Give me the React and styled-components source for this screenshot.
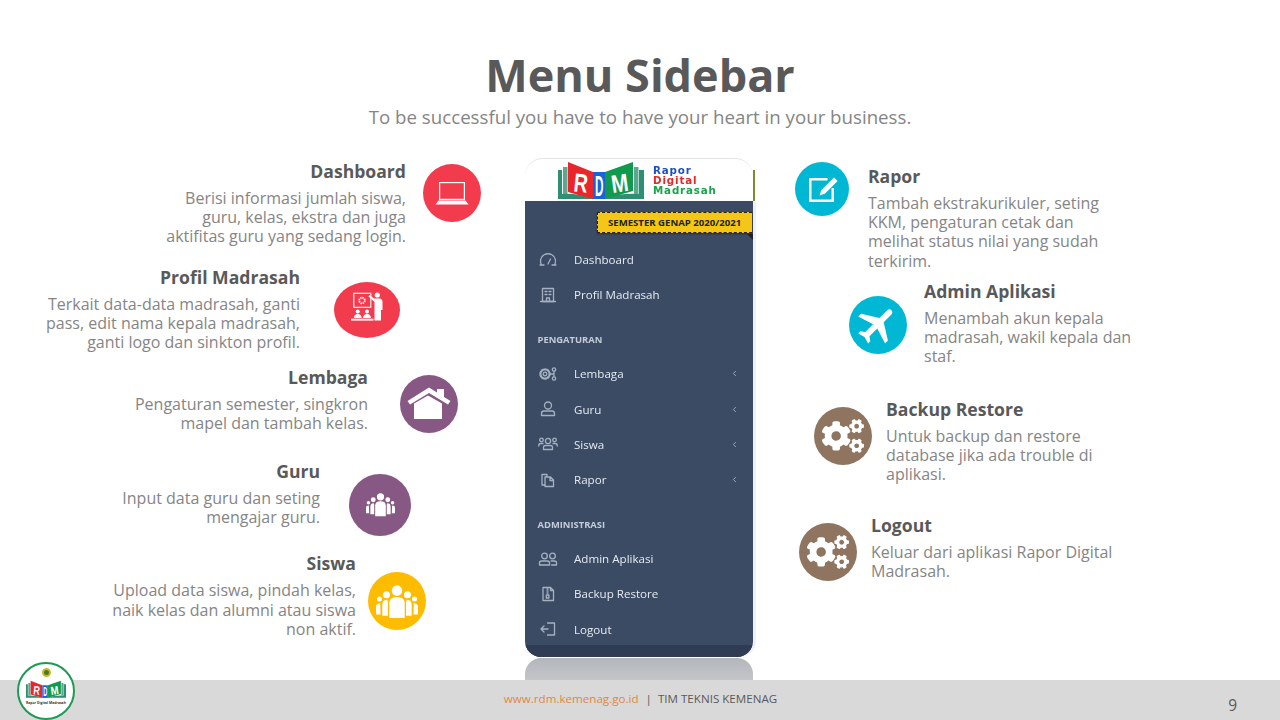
import React from "react";
import styled, { createGlobalStyle } from "styled-components";
import { FaCogs } from "react-icons/fa";
import { MdFlight } from "react-icons/md";
import { ChevronLeft } from "lucide-react";

const Global = createGlobalStyle`
  html, body { margin: 0; padding: 0; background: #fff; }
  * { box-sizing: border-box; }
`;

const Slide = styled.div`
  width: 1280px; height: 720px; overflow: hidden; display: flex; flex-direction: column;
  font-family: "Open Sans", sans-serif; background: #fff; position: relative;
`;
const Header = styled.header`
  height: 158px; padding-top: 44px; text-align: center; flex: none;
`;
const Title = styled.h1`
  margin: 0; font-size: 45px; line-height: 61px; font-weight: 700; color: #595959;
`;
const Subtitle = styled.p`
  margin: 0; font-size: 18.7px; line-height: 24px; color: #858585;
`;
const Stage = styled.main`
  flex: 1; display: flex; align-items: flex-start; min-height: 0;
`;
const Column = styled.section`
  width: ${p => p.$width}px; flex: none; display: flex; flex-direction: column;
  align-items: ${p => (p.$side === "left" ? "flex-end" : "flex-start")};
`;
const Callout = styled.article`
  display: flex; align-items: flex-start; gap: ${p => p.$gap}px;
  margin-top: ${p => p.$top}px;
  margin-${p => (p.$side === "left" ? "right" : "left")}: ${p => p.$inset}px;
`;
const CalloutText = styled.div`
  text-align: ${p => (p.$side === "left" ? "right" : "left")}; white-space: nowrap;
`;
const CalloutTitle = styled.h3`
  margin: 0 0 6px; font-size: 17.6px; line-height: 24px; font-weight: 700; color: #595959;
`;
const CalloutBody = styled.p`
  margin: 0; font-size: 16px; line-height: 19.2px; color: #858585;
`;
const Badge = styled.div`
  flex: none; width: ${p => p.$w}px; height: ${p => p.$h}px; border-radius: 50%;
  background: ${p => p.$color}; margin-top: ${p => p.$offset}px;
  display: flex; align-items: center; justify-content: center; color: #fff;
`;
const PlaneIcon = styled(MdFlight)`
  transform: rotate(45deg);
`;

/* central phone mock-up */
const Phone = styled.div`
  width: 228px; flex: none; display: flex; flex-direction: column; position: relative;
`;
const PhoneTop = styled.div`
  height: 43px; background: #fff; border-radius: 18px 18px 0 0; border-top: 1px solid #e4e4e4;
  display: flex; align-items: center; gap: 9px; padding: 0 0 0 33px; position: relative;
  &::after {
    content: ""; position: absolute; right: -2px; bottom: 0; width: 2px; height: 31px; background: #7f8a2a;
  }
`;
const Wordmark = styled.div`
  font-family: "DejaVu Sans", sans-serif; font-weight: 700; font-size: 10.3px; line-height: 10px;
  letter-spacing: .85px; filter: blur(.2px);
`;
const WordLine = styled.div`
  color: ${p => p.$color};
`;
const Panel = styled.nav`
  height: 456px; background: #3c4b64; border-radius: 0 0 16px 16px; overflow: hidden;
  display: flex; flex-direction: column; position: relative;
  box-shadow: 3px 0 0 #eef0f6;
  &::after {
    content: ""; position: absolute; left: 0; right: 0; bottom: 0; height: 12px; background: #303c54;
  }
`;
const Ribbon = styled.div`
  align-self: flex-end; margin: 11px 1px 0 0; width: 155px; height: 21px; flex: none;
  background: #f5c518; border-top: 1px dashed #222; border-bottom: 1px dashed #222; border-left: 1px dashed #222;
  color: #222; font-size: 9.6px; font-weight: 700; line-height: 19px; white-space: nowrap;
  padding-left: 10px; box-shadow: 0 1px 2px rgba(0,0,0,.4);
`;
const RibbonFold = styled.span`
  position: absolute; top: 33px; right: 0; width: 0; height: 0;
  border-top: 6px solid #222; border-right: 6px solid transparent; transform: scaleX(-1);
`;
const MenuList = styled.div`
  display: flex; flex-direction: column; padding-top: ${p => p.$top || 0}px;
  filter: blur(.25px);
`;
const SectionLabel = styled.div`
  font-size: 9.4px; font-weight: 700; color: #c3ccd8; line-height: 20px; padding: 18px 0 6px 12.5px; height: 44px;
`;
const MenuItem = styled.div`
  height: 35.2px; display: flex; align-items: center; color: #e4eaf1; font-size: 11.6px; padding-left: 13px;
`;
const MenuIcon = styled.svg`
  width: 20px; height: 18px; flex: none; margin-right: 16px; fill: none; stroke: #a5b1c1; stroke-width: 1.3;
  stroke-linecap: round; stroke-linejoin: round;
`;
const MenuText = styled.span`
  flex: 1;
`;
const Caret = styled(ChevronLeft)`
  margin-right: 14px; color: #b8c2cf;
`;
const Reflection = styled.div`
  margin-top: 1px; height: 30px; border-radius: 16px 16px 0 0;
  background: linear-gradient(#b3b6bb, #c9cbce);
`;

/* footer */
const Footer = styled.footer`
  height: 40px; flex: none; background: #d9d9d9; position: relative; z-index: 1;
  display: flex; justify-content: center; padding: 10px 0 0 1px; font-size: 11.6px; line-height: 18px; color: #595959;
`;
const Url = styled.span`
  color: #e2873f; margin-right: 7px;
`;
const PageNo = styled.span`
  position: absolute; right: 43px; top: 15px; font-size: 15.5px; line-height: 20px; color: #595959;
`;
const Seal = styled.div`
  position: absolute; left: 17px; top: -18px; width: 58px; height: 58px; border-radius: 50%;
  background: #fff; border: 2px solid #1f9a55; display: flex; flex-direction: column; align-items: center;
  padding-top: 4px;
`;
const SealMark = styled.span`
  width: 9px; height: 9px; border-radius: 50%; background: #4f7a23; border: 2px solid #c9b92c; flex: none;
`;
const SealCaption = styled.span`
  font-size: 3.4px; line-height: 4px; font-weight: 700; color: #333; white-space: nowrap;
`;

const BookLogo = ({ w, h }) => (
  <svg width={w} height={h} viewBox="0 0 86 38">
    <path d="M0 9 L4 9 L4 33 Q18 32 35 37 L47 37 Q62 32 81 33 L81 9 L86 9 L86 38 L0 38 Z" fill="#2e8f73" />
    <path d="M5 6 L9.5 6 L9.5 33 L5 33Z M76 6 L80.5 6 L80.5 33 L76 33Z" fill="#5aa890" />
    <path d="M10 1 L35 11 L35 38 L10 31 Z" fill="#e8262c" />
    <text x="16" y="31" fontFamily="'Liberation Sans', sans-serif" fontWeight="700" fontSize="26" fill="#fff" textLength="14" lengthAdjust="spacingAndGlyphs" transform="rotate(6 23 21)">R</text>
    <rect x="35" y="11" width="12" height="27" fill="#1565d8" />
    <text x="37" y="35" fontFamily="'Liberation Sans', sans-serif" fontWeight="700" fontSize="29" fill="#fff" textLength="8.5" lengthAdjust="spacingAndGlyphs">D</text>
    <path d="M47 11 L75 1 L75 30 L47 38 Z" fill="#0f9a4e" />
    <text x="53" y="31" fontFamily="'Liberation Sans', sans-serif" fontWeight="700" fontSize="25" fill="#fff" textLength="17" lengthAdjust="spacingAndGlyphs" transform="rotate(-8 61 21)">M</text>
  </svg>
);

const Laptop = () => (
  <svg width="34" height="24" viewBox="0 0 34 24">
    <rect x="4.6" y="1.6" width="24.8" height="16.8" fill="none" stroke="#fff" strokeWidth="1.2" />
    <path d="M3.5 19.5 H30.5 L33.5 23.5 H.5 Z" fill="#fff" />
  </svg>
);
const Teacher = () => (
  <svg width="45" height="45" viewBox="0 0 45 45" fill="#fff">
    <rect x="8.8" y="6.3" width="17" height="14" fill="none" stroke="#fff" strokeWidth="1.1" />
    <circle cx="17" cy="13.5" r="2.8" fill="none" stroke="#fff" strokeWidth="1.8" strokeDasharray="1.4 .8" />
    <circle cx="32.3" cy="8" r="2.6" />
    <path d="M24.5 8 L29 11.5 L34.5 11.5 Q37.5 11.5 37.5 15 L37.5 23 L36 23 L36 33.5 L29.5 33.5 L29.5 15 L23.5 9.5 Z" />
    <circle cx="12.7" cy="24.5" r="2" /><circle cx="22" cy="24.5" r="2" />
    <path d="M9 31 Q9 27 12.7 27 Q16.4 27 16.6 31 L18 31 Q18.4 27 22 27 Q25.6 27 26 31 Z" />
    <rect x="6" y="31.7" width="22.5" height="1.9" />
  </svg>
);
const House = () => (
  <svg width="44" height="34" viewBox="0 0 44 34" fill="#fff">
    <path d="M.5 14 L22 .5 L30 5.5 L30 2 L37 2 L37 10 L43.5 14 L41 17.5 L22 6 L3 17.5 Z" />
    <path d="M7 16.5 L21 8.5 L35 16.5 L35 32 L7 32 Z" />
  </svg>
);
const People = ({ size }) => (
  <svg width={size} height={size * 0.8} viewBox="0 0 60 48" fill="#fff">
    <circle cx="30" cy="8" r="7.5" />
    <path d="M19 26 Q19 17 30 17 Q41 17 41 26 L41 48 L19 48 Z" />
    <circle cx="15" cy="14" r="5" /><circle cx="45" cy="14" r="5" />
    <path d="M16 21 Q9 21 9 28 L9 44 L17 44 L17 24 Z M44 21 Q51 21 51 28 L51 44 L43 44 L43 24 Z" />
    <circle cx="5" cy="20" r="3.6" /><circle cx="55" cy="20" r="3.6" />
    <path d="M6 26 Q0 26 0 31 L0 42 L6.5 42 Z M54 26 Q60 26 60 31 L60 42 L53.5 42 Z" />
  </svg>
);
const EditSquare = () => (
  <svg width="34" height="30" viewBox="0 0 34 30">
    <path d="M22.5 5.25 H5.25 V26.75 H27.75 V14" fill="none" stroke="#fff" strokeWidth="2.5" />
    <path d="M14 22 L16 16 L29 3 L33 7 L20 20 Z" fill="#fff" stroke="#00b8d4" strokeWidth=".7" />
  </svg>
);

const ICONS = {
  gauge: <><path d="M3.5 14 A7.5 7.5 0 1 1 16.5 14" strokeDasharray="3 1" /><path d="M2 14 H6 M14 14 H18 M10 13 L12.5 8" /></>,
  building: <><rect x="4.5" y="2.5" width="11" height="13" /><path d="M2.5 15.5 H17.5 M7 5.5 H9 M11 5.5 H13 M7 8.5 H9 M11 8.5 H13 M8.5 15.5 V12 H11.5 V15.5" /></>,
  cogs: <><circle cx="7" cy="9" r="1.8" /><circle cx="7" cy="9" r="4.6" strokeWidth="2.2" strokeDasharray="1.7 1.2" /><circle cx="16" cy="4.5" r="1.7" /><circle cx="16" cy="13.5" r="1.7" /><path d="M12 9 H16 V11.5 M16 6.5 V9" /></>,
  user: <><circle cx="10" cy="5.5" r="3.5" /><path d="M3.5 13.5 Q3.5 11 6 11 H14 Q16.5 11 16.5 13.5 V15.5 H3.5 Z" /></>,
  users3: <><circle cx="10" cy="6" r="2.6" /><circle cx="3.5" cy="5" r="1.8" /><circle cx="16.5" cy="5" r="1.8" /><path d="M5.5 14.5 V12.5 Q5.5 10.5 7.5 10.5 H12.5 Q14.5 10.5 14.5 12.5 V14.5 Z" /><path d="M0.8 11 V10 Q.8 8.5 3 8.5 H5 M19.2 11 V10 Q19.2 8.5 17 8.5 H15" /></>,
  files: <><path d="M7 14 H4 V3.5 H9 V5.5" /><path d="M7 6 H12.5 L15.5 9 V15.5 H7 Z M12 6 V9.5 H15.5" /></>,
  users2: <><circle cx="6.5" cy="6" r="2.8" /><circle cx="14.5" cy="6" r="2.8" /><path d="M1.5 15 V13 Q1.5 11 3.5 11 H9.5 Q11.5 11 11.5 13 V15 Z" /><path d="M13 11 H16.5 Q18.5 11 18.5 13 V15 H13.5" /></>,
  zip: <><path d="M5 2.5 H12.5 L15.5 5.5 V15.5 H5 Z M12.5 2.5 V5.5 H15.5" /><path d="M9 4 H10 M9 6 H10 M9 8 H10" /><rect x="8.3" y="10" width="2.6" height="3" /></>,
  logout: <><path d="M9.5 3 H16.5 V15 H9.5 M10 9 H3 M6 6 L3 9 L6 12" /></>,
};

const LEFT = [
  { top: 1, inset: 44, gap: 17, title: "Dashboard", lines: ["Berisi informasi jumlah siswa,", "guru, kelas, ekstra dan juga", "aktifitas guru yang sedang login."], w: 58, h: 58, off: 5, color: "#f23c4e", icon: <Laptop /> },
  { top: 18, inset: 125, gap: 34, title: "Profil Madrasah", lines: ["Terkait data-data madrasah, ganti", "pass, edit nama kepala madrasah,", "ganti logo dan sinkton profil."], w: 66, h: 56, off: 17, color: "#f23c4e", icon: <Teacher /> },
  { top: 13, inset: 67, gap: 32, title: "Lembaga", lines: ["Pengaturan semester, singkron", "mapel dan tambah kelas."], w: 58, h: 58, off: 10, color: "#875883", icon: <House /> },
  { top: 25.4, inset: 114, gap: 29, title: "Guru", lines: ["Input data guru dan seting", "mengajar guru."], w: 62, h: 62, off: 15, color: "#875883", icon: <People size={29} /> },
  { top: 15.4, inset: 99, gap: 12, title: "Siswa", lines: ["Upload data siswa, pindah kelas,", "naik kelas dan alumni atau siswa", "non aktif."], w: 58, h: 58, off: 21, color: "#fdbc00", icon: <People size={42} /> },
];
const RIGHT = [
  { top: 6, inset: 42, gap: 19, title: "Rapor", lines: ["Tambah ekstrakurikuler, seting", "KKM, pengaturan cetak dan", "melihat status nilai yang sudah", "terkirim."], w: 54, h: 54, off: -2, color: "#00b8d4", icon: <EditSquare /> },
  { top: 7.8, inset: 96, gap: 17, title: "Admin Aplikasi", lines: ["Menambah akun kepala", "madrasah, wakil kepala dan", "staf."], w: 58, h: 58, off: 17, color: "#00b8d4", icon: <PlaneIcon size={48} /> },
  { top: 30.6, inset: 61, gap: 14, title: "Backup Restore", lines: ["Untuk backup dan restore", "database jika ada trouble di", "aplikasi."], w: 58, h: 58, off: 10, color: "#8f7460", icon: <FaCogs size={42} /> },
  { top: 28.6, inset: 46, gap: 14, title: "Logout", lines: ["Keluar dari aplikasi Rapor Digital", "Madrasah."], w: 58, h: 58, off: 10, color: "#8f7460", icon: <FaCogs size={42} /> },
];

const CalloutRow = ({ side, item }) => {
  const badge = <Badge $w={item.w} $h={item.h} $offset={item.off} $color={item.color}>{item.icon}</Badge>;
  const text = (
    <CalloutText $side={side}>
      <CalloutTitle>{item.title}</CalloutTitle>
      <CalloutBody>
        {item.lines.map((l, i) => <React.Fragment key={i}>{i > 0 && <br />}{l}</React.Fragment>)}
      </CalloutBody>
    </CalloutText>
  );
  return (
    <Callout $side={side} $top={item.top} $inset={item.inset} $gap={item.gap}>
      {side === "left" ? <>{text}{badge}</> : <>{badge}{text}</>}
    </Callout>
  );
};

const Item = ({ icon, label, caret }) => (
  <MenuItem>
    <MenuIcon viewBox="0 0 20 18">{ICONS[icon]}</MenuIcon>
    <MenuText>{label}</MenuText>
    {caret && <Caret size={9} strokeWidth={2} />}
  </MenuItem>
);

export default function App() {
  return (
    <Slide>
      <Global />
      <Header>
        <Title>Menu Sidebar</Title>
        <Subtitle>To be successful you have to have your heart in your business.</Subtitle>
      </Header>
      <Stage>
        <Column $side="left" $width={525}>
          {LEFT.map(i => <CalloutRow key={i.title} side="left" item={i} />)}
        </Column>
        <Phone>
          <PhoneTop>
            <BookLogo w={86} h={38} />
            <Wordmark>
              <WordLine $color="#1d4fc4">Rapor</WordLine>
              <WordLine $color="#e02a2a">Digital</WordLine>
              <WordLine $color="#18a34a">Madrasah</WordLine>
            </Wordmark>
          </PhoneTop>
          <Panel>
            <Ribbon>SEMESTER GENAP 2020/2021</Ribbon>
            <RibbonFold />
            <MenuList $top={9}>
              <Item icon="gauge" label="Dashboard" />
              <Item icon="building" label="Profil Madrasah" />
              <SectionLabel>PENGATURAN</SectionLabel>
              <Item icon="cogs" label="Lembaga" caret />
              <Item icon="user" label="Guru" caret />
              <Item icon="users3" label="Siswa" caret />
              <Item icon="files" label="Rapor" caret />
              <SectionLabel>ADMINISTRASI</SectionLabel>
              <Item icon="users2" label="Admin Aplikasi" />
              <Item icon="zip" label="Backup Restore" />
              <Item icon="logout" label="Logout" />
            </MenuList>
          </Panel>
          <Reflection />
        </Phone>
        <Column $side="right" $width={527}>
          {RIGHT.map(i => <CalloutRow key={i.title} side="right" item={i} />)}
        </Column>
      </Stage>
      <Footer>
        <Seal>
          <SealMark />
          <BookLogo w={40} h={24} />
          <SealCaption>Rapor Digital Madrasah</SealCaption>
        </Seal>
        <Url>www.rdm.kemenag.go.id</Url>
        <span>|&nbsp; TIM TEKNIS KEMENAG</span>
        <PageNo>9</PageNo>
      </Footer>
    </Slide>
  );
}
